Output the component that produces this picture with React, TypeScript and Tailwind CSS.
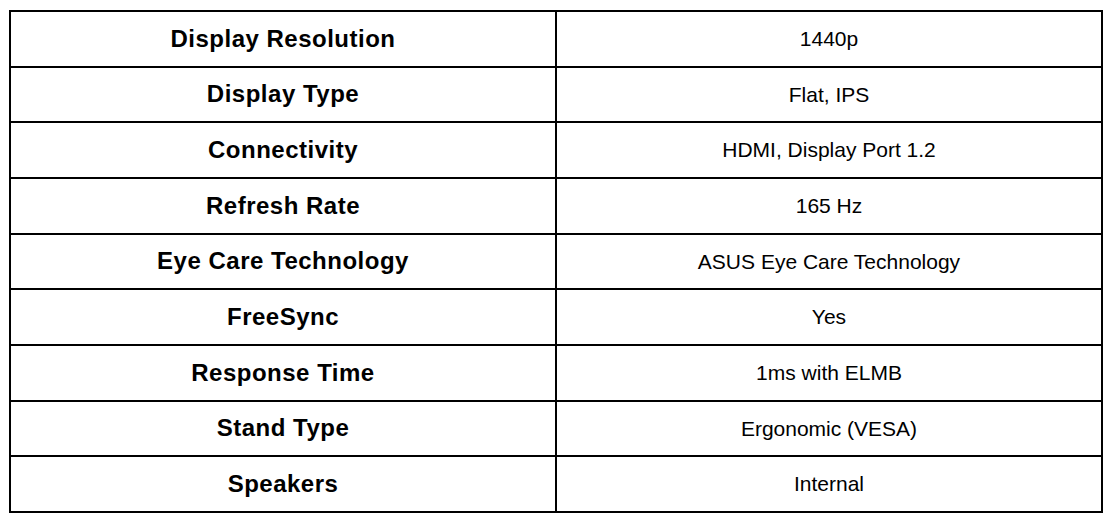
import React from "react";

const rows: [string, string][] = [
  ["Display Resolution", "1440p"],
  ["Display Type", "Flat, IPS"],
  ["Connectivity", "HDMI, Display Port 1.2"],
  ["Refresh Rate", "165 Hz"],
  ["Eye Care Technology", "ASUS Eye Care Technology"],
  ["FreeSync", "Yes"],
  ["Response Time", "1ms with ELMB"],
  ["Stand Type", "Ergonomic (VESA)"],
  ["Speakers", "Internal"],
];

export default function App() {
  return (
    <div className="w-[1111px] h-[523px] bg-white pl-[9px] pt-[10px]" style={{ fontFamily: '"Liberation Sans", Arial, sans-serif' }}>
      <table className="w-[1094px] h-[503px] border-collapse border-2 border-black text-[21px] text-black table-fixed">
        <tbody>
          {rows.map(([k, v]) => (
            <tr key={k}>
              <td className="border-2 border-black text-center font-bold text-[24px] tracking-[0.5px] w-1/2">{k}</td>
              <td className="border-2 border-black text-center w-1/2">{v}</td>
            </tr>
          ))}
        </tbody>
      </table>
    </div>
  );
}
